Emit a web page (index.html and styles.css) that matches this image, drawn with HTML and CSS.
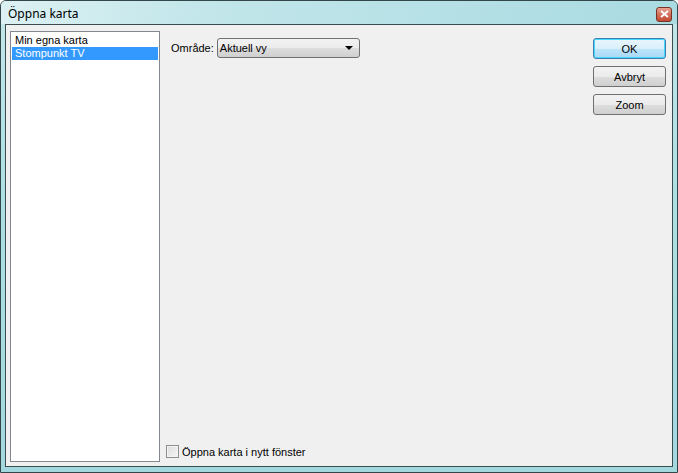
FILE: index.html
```html
<!DOCTYPE html>
<html lang="sv">
<head>
  <meta charset="UTF-8">
  <title>Öppna karta</title>
  <link rel="stylesheet" href="styles.css">
</head>
<body>
  <div class="window">
    <div class="titlebar">
      <span class="title">Öppna karta</span>
      <div class="close">
        <svg width="9" height="8" viewBox="0 0 9 8">
          <path d="M1 1 L8 7 M8 1 L1 7" stroke="#fff" stroke-width="2"/>
        </svg>
      </div>
    </div>
    <div class="frame">
      <div class="content">
        <ul class="listbox">
          <li class="item">Min egna karta</li>
          <li class="item selected">Stompunkt TV</li>
        </ul>
        <div class="middle">
          <div class="row">
            <label class="label">Område:</label>
            <div class="combo">
              <span>Aktuell vy</span>
              <span class="arrow"></span>
            </div>
          </div>
          <label class="check">
            <span class="box"></span>
            Öppna karta i nytt fönster
          </label>
        </div>
        <div class="buttons">
          <button class="button default">OK</button>
          <button class="button">Avbryt</button>
          <button class="button">Zoom</button>
        </div>
      </div>
    </div>
  </div>
</body>
</html>
```

FILE: styles.css
```css
body {
  margin: 0;
  font-family: 'Liberation Sans', Arial, sans-serif;
  font-size: 11px;
  color: #000;
}

.window {
  width: 678px;
  height: 473px;
  box-sizing: border-box;
  border: 1px solid #33474a;
  border-radius: 6px 6px 0 0;
  background: linear-gradient(180deg, #c4e6ea 0%, #ade0e4 40%, #a2d8de 100%);
  display: flex;
  flex-direction: column;
  overflow: hidden;
}

.titlebar {
  height: 23px;
  display: flex;
  align-items: center;
  justify-content: space-between;
  padding: 0 5px 0 7px;
  background: linear-gradient(100deg, #dcf1f3 0%, #c2e6ea 30%, #a9dbe1 100%);
}

.title {
  font-family: 'Noto Sans', sans-serif;
  font-size: 12px;
  color: #000;
  padding-top: 1px;
}

.close {
  width: 16px;
  height: 15px;
  margin-top: 3px;
  border: 1px solid #7a3326;
  border-radius: 3px;
  box-sizing: border-box;
  background: linear-gradient(180deg, #eaa592 0%, #d4705a 50%, #c24a32 100%);
  display: flex;
  align-items: center;
  justify-content: center;
}

.frame {
  flex: 1;
  padding: 0 4px 5px 4px;
  display: flex;
}

.content {
  flex: 1;
  border: 1px solid #3a4c4f;
  background: #f0f0f0;
  display: flex;
  padding: 6px 6px 4px 4px;
}

.listbox {
  width: 150px;
  box-sizing: border-box;
  margin: 0;
  padding: 2px 1px;
  list-style: none;
  background: #fff;
  border: 1px solid #828790;
}

.item {
  height: 13px;
  line-height: 13px;
  padding-left: 3px;
}

.item.selected {
  background: #3399ff;
  color: #fff;
}

.middle {
  flex: 1;
  display: flex;
  flex-direction: column;
  justify-content: space-between;
  padding: 7px 0 4px 6px;
}

.row {
  display: flex;
  align-items: center;
  gap: 3px;
  padding-left: 5px;
}

.combo {
  width: 143px;
  height: 20px;
  box-sizing: border-box;
  border: 1px solid #707070;
  border-radius: 3px;
  background: linear-gradient(180deg, #f3f3f3 0%, #ebebeb 50%, #dddddd 51%, #cfcfcf 100%);
  display: flex;
  align-items: center;
  justify-content: space-between;
  padding: 0 6px 0 2px;
}

.arrow {
  width: 0;
  height: 0;
  border-left: 4px solid transparent;
  border-right: 4px solid transparent;
  border-top: 4px solid #000;
}

.check {
  display: flex;
  align-items: center;
  gap: 3px;
}

.box {
  width: 13px;
  height: 13px;
  box-sizing: border-box;
  border: 1px solid #8f8f8f;
  background: linear-gradient(135deg, #dcdcdc 0%, #f6f6f6 100%);
  box-shadow: inset 0 0 0 1px #f4f4f4;
}

.buttons {
  display: flex;
  flex-direction: column;
  gap: 7px;
  padding-top: 7px;
}

.button {
  width: 73px;
  height: 21px;
  border: 1px solid #707070;
  border-radius: 3px;
  background: linear-gradient(180deg, #f2f2f2 0%, #ebebeb 50%, #dddddd 51%, #cfcfcf 100%);
  font-family: 'Liberation Sans', Arial, sans-serif;
  font-size: 11px;
  color: #000;
  padding: 0;
}

.button.default {
  border-color: #3c7fb1;
  box-shadow: inset 0 0 0 1px #48d8fb;
  background: linear-gradient(180deg, #eaf6fd 0%, #d9f0fc 50%, #bee6fd 51%, #a7d9f5 100%);
}
```
